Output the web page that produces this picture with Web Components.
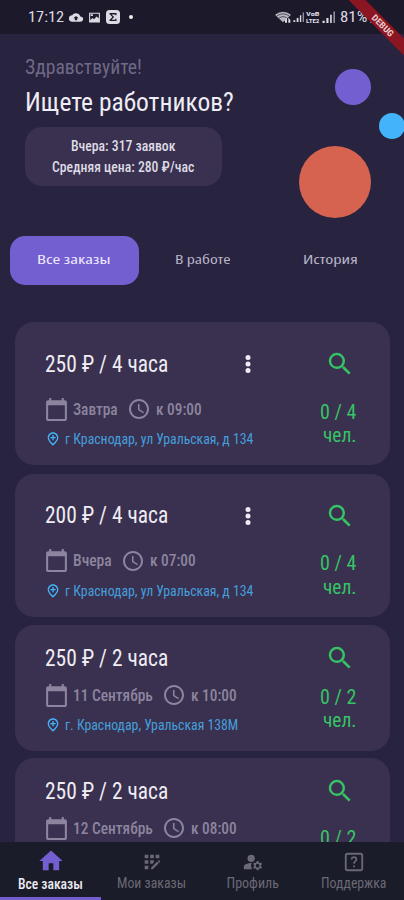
<!DOCTYPE html>
<html lang="ru">
<head>
<meta charset="utf-8">
<meta name="viewport" content="width=device-width">
<title>Все заказы</title>
<style>
html,body{margin:0;height:100%;overflow:hidden;background:#28233f}
body{font-family:"Roboto Condensed",Roboto,sans-serif}
</style>
</head>
<body>
<orders-app></orders-app>
<script>
const define = (name, html, setup) => customElements.define(name, class extends HTMLElement {
  connectedCallback() {
    if (this.shadowRoot) return;
    const root = this.attachShadow({ mode: 'open' });
    root.innerHTML = typeof html === 'function' ? html(this) : html;
    if (setup) setup(this, root);
  }
});

// Single line of condensed text fitted to the width given in "w".
define('fit-text', el => `<style>
  :host{display:block;flex:none;width:${el.getAttribute('w')}px;white-space:nowrap}
  span{display:inline-block;transform-origin:0 50%;font-stretch:75%}
</style><span>${el.getAttribute('text')}</span>`, (el, root) => {
  const s = root.querySelector('span');
  s.style.transform = `scaleX(${+el.getAttribute('w') / s.offsetWidth})`;
});

const icons = {
  calendar: '<path d="M20 3h-1V1h-2v2H7V1H5v2H4c-1.1 0-2 .9-2 2v16c0 1.1.9 2 2 2h16c1.1 0 2-.9 2-2V5c0-1.1-.9-2-2-2zm0 18H4V8h16v13z"/>',
  clock: '<path d="M12 2C6.5 2 2 6.500 2 12s4.500 10 10 10 10-4.500 10-10S17.500 2 12 2zm0 18c-4.400 0-8-3.600-8-8s3.600-8 8-8 8 3.600 8 8-3.600 8-8 8zm.5-13H11v6l5.200 3.200.8-1.300-4.500-2.700V7z"/>',
  pin: '<path d="M12 2c-4.200 0-8 3.200-8 8.200 0 3.300 2.700 7.200 8 11.800 5.300-4.600 8-8.500 8-11.800C20 5.200 16.200 2 12 2zm0 17.300c-4.100-3.800-6-6.800-6-9.100C6 6.600 8.600 4 12 4s6 2.600 6 6.200c0 2.300-1.900 5.300-6 9.100z" fill-rule="evenodd"/><path d="M11 6h2v3h3v2h-3v3h-2v-3H8V9h3z"/>',
  search: '<path d="M15.500 14h-.79l-.28-.27A6.470 6.470 0 0 0 16 9.500 6.500 6.500 0 1 0 9.500 16c1.610 0 3.090-.59 4.230-1.570l.27.28v.79l5 4.990L20.490 19l-4.990-5zm-6 0C7.010 14 5 11.990 5 9.500S7.010 5 9.500 5 14 7.010 14 9.500 11.990 14 9.500 14z"/>',
  more: '<circle cx="12" cy="5.500" r="2.500"/><circle cx="12" cy="12" r="2.500"/><circle cx="12" cy="18.500" r="2.500"/>',
  home: '<path d="M10 20v-6h4v6h5v-8h3L12 3 2 12h3v8z"/>',
  registration: '<path d="M10 4h4v4h-4zM4 16h4v4H4zM4 10h4v4H4zM4 4h4v4H4zM14 12.420V10h-4v4h2.420zM20.880 11.290l-1.170-1.170c-.16-.16-.42-.16-.58 0l-.88.88L20 12.750l.88-.88c.16-.16.16-.42 0-.58zM11 18.250V20h1.750l6.670-6.670-1.750-1.750zM16 4h4v4h-4z"/>',
  manage: '<circle cx="10" cy="8" r="4"/><path d="M10.670 13.020c-.22-.01-.44-.02-.67-.02-2.420 0-4.680.67-6.610 1.820C2.510 15.340 2 16.320 2 17.350V20h9.260a6.960 6.960 0 0 1-.59-6.980z"/><path fill-rule="evenodd" d="m20.750 16-.06-.63 1.140-1.010-1-1.730-1.450.49c-.32-.27-.68-.48-1.080-.63L18 11h-2l-.3 1.490c-.4.15-.76.36-1.080.63l-1.450-.49-1 1.730 1.140 1.010-.06.630.06.630-1.140 1.010 1 1.730 1.450-.49c.32.27.68.48 1.080.63L16 21h2l.3-1.490c.4-.15.76-.36 1.080-.63l1.450.49 1-1.730-1.140-1.010zM17 18a2 2 0 1 1 0-4 2 2 0 0 1 0 4z"/>',
  help: '<path fill-rule="evenodd" d="M5 2h14q3 0 3 3v14q0 3-3 3H5q-3 0-3-3V5q0-3 3-3zm0 2q-1 0-1 1v14q0 1 1 1h14q1 0 1-1V5q0-1-1-1z"/><path d="M8.400 9.300c0-2.200 1.600-3.500 3.600-3.500s3.600 1.300 3.600 3.200c0 2.500-2.700 2.700-2.700 5h-1.800c0-3.200 2.500-3.200 2.500-5 0-.9-.7-1.500-1.600-1.500s-1.700.6-1.700 1.800zM11 15.700h2v2h-2z"/>',
  cloud: '<path fill-rule="evenodd" d="M19.400 10A7.500 7.500 0 0 0 5.400 8 6 6 0 0 0 6 20h13a5 5 0 0 0 .4-10zM12 9l4.500 4.500H14V17h-4v-3.500H7.500z"/>',
  image: '<path fill-rule="evenodd" d="M2 3h20v18H2zm2 2v12l4-4 3 2 5-5 4 4V5zM5 6h4v3H5z"/>',
  sigma: '<path fill-rule="evenodd" d="M6 0h12q6 0 6 6v12q0 6-6 6H6q-6 0-6-6V6q0-6 6-6zm0 5v2l5 5-5 5v2h12v-4h-2v1.500H9.500L14 12 9.500 7.500H16V9h2V5z"/>',
  wifi: '<path d="M12 21 0 8q12-10 24 0z" opacity=".8"/><path d="M3 10q9-7 18 0M6 13.500q6-5 12 0" fill="none" stroke="#1c192b" stroke-width="1"/><path d="M15 22v-5l3-4v9zM20 22v-9l3 4v5z"/>',
  signal: '<path d="M1 18h4v4H1zM8 13h4v9H8zM15 7h3v15h-3z"/><path d="M21 1h3v21h-3z" opacity=".6"/>',
  battery: '<path fill-rule="evenodd" d="M8 0h8v3h4v21H4V3h4zM12 8l-4 7h3v5l5-8h-4z"/>'
};
define('app-icon', el => { const s = el.getAttribute('size'); return `<style>
  :host{display:block;flex:none;width:${s}px;height:${el.getAttribute('h') || s}px} svg{display:block;width:100%;height:100%}
</style><svg viewBox="0 0 24 24" fill="currentColor" preserveAspectRatio="none">${icons[el.getAttribute('name')]}</svg>`; });

define('status-bar', `<style>
  :host{display:flex;height:34px;box-sizing:border-box;padding:0 26px 0 28px;align-items:center;background:#1c192b;color:#dddae4;font-size:15px;line-height:34px;position:relative;overflow:hidden}
  .l,.r{display:flex;align-items:center}.l{gap:5px;flex:1}.r{gap:2px}
  .dot{width:4px;height:4px;border-radius:50%;background:#eee;margin-left:4px}
  .v{font:700 6px/7px Roboto,sans-serif}
</style>
<div class="l"><fit-text w="36" text="17:12"></fit-text><app-icon name="cloud" size="14" h="13"></app-icon><app-icon name="image" size="13"></app-icon><app-icon name="sigma" size="14"></app-icon><i class="dot"></i></div>
<div class="r"><app-icon name="wifi" size="16" h="14"></app-icon><app-icon name="signal" size="11"></app-icon><div class="v"><fit-text w="14" text="VoB"></fit-text><fit-text w="14" text="LTE2"></fit-text></div><app-icon name="signal" size="13"></app-icon><fit-text style="margin-left:3px" w="27" text="81%"></fit-text><app-icon name="battery" size="9" h="12"></app-icon></div>`);

define('debug-ribbon', `<style>
  :host{position:absolute;right:0;top:0;width:60px;height:60px;overflow:hidden}
  div{position:absolute;left:-18px;top:13px;width:100px;height:12px;background:#8b1520;transform:rotate(45deg);display:flex;justify-content:center;font:700 9px/12px Roboto,sans-serif;color:#e9c9ce}
  fit-text{margin-left:19px}
</style><div><fit-text w="27" text="DEBUG"></fit-text></div>`);

define('page-hero', `<style>
  :host{display:block;height:202px;padding:0 25px;position:relative}
  .hi{font-size:20px;line-height:24px;padding-top:21px;color:#6f6985}
  .q{font-size:26px;line-height:32px;padding-top:7px;color:#eeecf4}
  .chip{width:197px;height:59px;box-sizing:border-box;padding:9px 2px 0 0;border-radius:17px;background:#39314f;margin-top:9px;display:flex;flex-direction:column;align-items:center;font-size:14px;font-weight:500;line-height:21px;color:#dedbe5}
  i{position:absolute;border-radius:50%}
  .a{left:335px;top:35px;width:36px;height:36px;background:#745fd0}
  .b{left:379px;top:79px;width:26px;height:26px;background:#43b4fb}
  .c{left:299px;top:112px;width:72px;height:72px;background:#d6634f}
</style>
<div class="hi"><fit-text w="117" text="Здравствуйте!"></fit-text></div>
<div class="q"><fit-text w="209" text="Ищете работников?"></fit-text></div>
<div class="chip"><fit-text w="104" text="Вчера: 317 заявок"></fit-text><fit-text w="142" text="Средняя цена: 280 ₽/час"></fit-text></div>
<i class="a"></i><i class="b"></i><i class="c"></i>`);

define('order-tabs', `<style>
  :host{display:grid;grid-template-columns:129px 127px 128px;height:49px;padding-left:10px;font:500 13px/47px "Open Sans","Noto Sans",sans-serif;color:#b9b4c9}
  div{display:flex;justify-content:center;border-radius:15px}
  .on{background:#745fd0;color:#eeeaff;box-sizing:border-box;padding-right:1px}
</style><div class="on"><fit-text w="74" text="Все заказы"></fit-text></div><div><fit-text w="56" text="В работе"></fit-text></div><div><fit-text w="55" text="История"></fit-text></div>`);

define('order-card', el => { const a = n => el.getAttribute(n), big = el.hasAttribute('menu'), low = +a('drop') || 0; return `<style>
  :host{display:flex;flex:none;box-sizing:border-box;height:${big ? 143 : 126}px;border-radius:19px;background:#39314f;padding:${big ? 28 : 19}px 34px 0 30px}
  .m{flex:1}
  .t{display:flex;justify-content:space-between;height:28px;align-items:center;font-size:23px;line-height:28px;color:#efecf4;padding-right:58px}
  .t fit-text{padding-top:1px}
  .d{display:flex;height:24px;align-items:center;margin:${big ? 19 : 11}px 0 0 -1px;font-size:16px;line-height:24px;font-weight:500;color:#8d859f}
  .d fit-text{margin-left:4px;padding-top:1px}.d fit-text+app-icon{margin-left:9px}.d app-icon+fit-text:last-child{margin-left:5px}
  .p{display:flex;height:16px;align-items:center;margin-top:10px;font-size:14px;line-height:16px;color:#459fdc;gap:4px}
  .p app-icon{color:#43b4fb}
  .r{width:38px;display:flex;flex-direction:column;align-items:flex-end;color:#37c365;font-size:20px;line-height:23px}
  .s{height:28px;display:flex;align-items:center;margin:0 1px ${(big ? 22 : 13) + low}px 0}
  .r fit-text{padding-top:.5px}
</style>
<div class="m"><div class="t"><fit-text w="123" text="${a('price')}"></fit-text>${big ? '<app-icon name="more" size="24"></app-icon>' : ''}</div>
<div class="d"><app-icon name="calendar" size="25" h="25"></app-icon><fit-text w="${a('dw')}" text="${a('date')}"></fit-text><app-icon name="clock" size="24"></app-icon><fit-text w="46" text="${a('time')}"></fit-text></div>
${a('address') ? `<div class="p"><app-icon name="pin" size="16"></app-icon><fit-text w="${a('aw')}" text="${a('address')}"></fit-text></div>` : ''}</div>
<div class="r"><div class="s"><app-icon name="search" size="30"></app-icon></div><fit-text w="36" text="${a('count')}"></fit-text>${a('address') ? '<fit-text w="33" text="чел."></fit-text>' : ''}</div>`; });

define('nav-item', el => `<style>
  :host{display:flex;flex-direction:column;align-items:center;box-sizing:border-box;height:58px;padding-top:${el.hasAttribute('active') ? 5 : 9}px;color:#6a6975;font-size:14px;line-height:17px}
  :host([active]){box-shadow:inset 0 -3px #745fd0;color:#eeecf4;font-weight:500}
  :host([active]) app-icon{color:#745fd0}
  fit-text{margin-top:${el.hasAttribute('active') ? 1 : 2}px}
</style><app-icon name="${el.getAttribute('icon')}" size="${el.hasAttribute('active') ? 28 : 22}"></app-icon><fit-text w="${el.getAttribute('w')}" text="${el.getAttribute('label')}"></fit-text>`);

define('bottom-nav', `<style>
  :host{display:grid;grid-template-columns:repeat(4,1fr);height:58px;flex:none;background:#1b1c29}
</style><nav-item active icon="home" w="65" label="Все заказы"></nav-item><nav-item icon="registration" w="69" label="Мои заказы"></nav-item><nav-item icon="manage" w="52" label="Профиль"></nav-item><nav-item icon="help" w="65" label="Поддержка"></nav-item>`);

define('orders-app', `<style>
  :host{display:flex;flex-direction:column;height:900px;width:404px;background:#28233f;position:relative;overflow:hidden}
  .list{flex:1;min-height:0;overflow:hidden;display:flex;flex-direction:column;gap:8.5px;padding:37px 14px 0 15px}
  order-card:last-child{margin-top:-1.5px}
</style>
<status-bar></status-bar><page-hero></page-hero><order-tabs></order-tabs>
<div class="list">
<order-card menu price="250 ₽ / 4 часа" date="Завтра" dw="45" time="к 09:00" aw="188" address="г Краснодар, ул Уральская, д 134" count="0 / 4"></order-card>
<order-card menu price="200 ₽ / 4 часа" date="Вчера" dw="39" time="к 07:00" aw="188" address="г Краснодар, ул Уральская, д 134" count="0 / 4"></order-card>
<order-card price="250 ₽ / 2 часа" date="11 Сентябрь" dw="80" time="к 10:00" aw="173" address="г. Краснодар, Уральская 138М" count="0 / 2"></order-card>
<order-card price="250 ₽ / 2 часа" date="12 Сентябрь" dw="80" time="к 08:00" count="0 / 2" drop="8"></order-card>
</div>
<bottom-nav></bottom-nav><debug-ribbon></debug-ribbon>`);
</script>
</body>
</html>
